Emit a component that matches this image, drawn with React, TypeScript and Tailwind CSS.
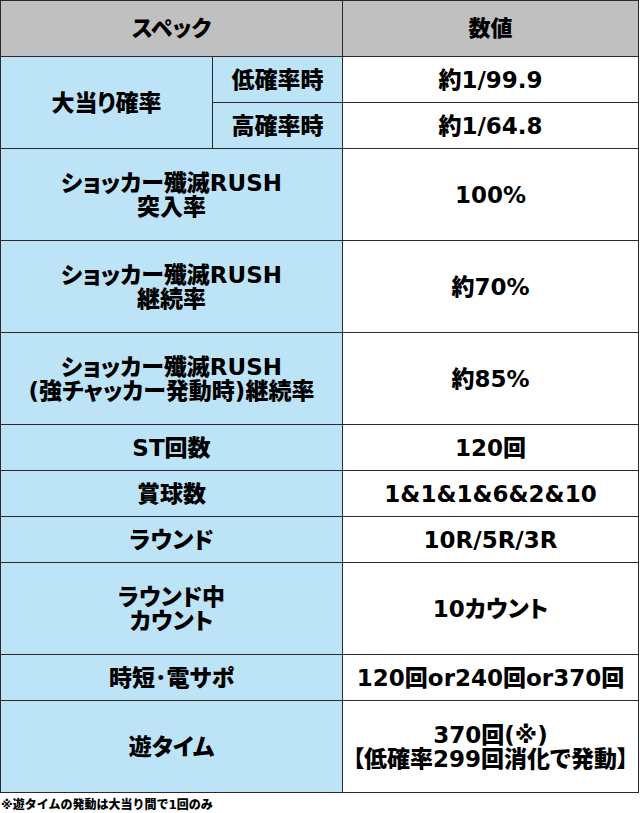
import React from 'react'

const cellBorder = 'border border-[#2a2a2a]'
const label = `${cellBorder} bg-[#bde3f7] text-center align-middle`
const value = `${cellBorder} bg-white text-center align-middle`

type Row = { label: React.ReactNode; value: React.ReactNode; tall?: boolean }

const rows: Row[] = [
  { label: <>ショッカー殲滅RUSH<br />突入率</>, value: '100%', tall: true },
  { label: <>ショッカー殲滅RUSH<br />継続率</>, value: '約70%', tall: true },
  { label: <>ショッカー殲滅RUSH<br />(強チャッカー発動時)継続率</>, value: '約85%', tall: true },
  { label: 'ST回数', value: '120回' },
  { label: '賞球数', value: '1&1&1&6&2&10' },
  { label: 'ラウンド', value: '10R/5R/3R' },
  { label: <>ラウンド中<br />カウント</>, value: '10カウント', tall: true },
  { label: '時短･電サポ', value: '120回or240回or370回' },
  { label: '遊タイム', value: <>370回(※)<br />【低確率299回消化で発動】</>, tall: true },
]

export default function App() {
  return (
    <div
      className="w-[640px] h-[813px] bg-white text-black font-black"
      style={{ fontFamily: '"DejaVu Sans", "Noto Sans CJK JP", sans-serif' }}
    >
      <table className="w-[639px] border-collapse table-fixed text-[23px] leading-[24px] [font-feature-settings:'palt']">
        <colgroup>
          <col className="w-[212px]" />
          <col className="w-[130px]" />
          <col />
        </colgroup>
        <tbody>
          <tr className="h-[56px]">
            <td colSpan={2} className={`${cellBorder} bg-[#c0c0c0] text-center text-[22px]`}>スペック</td>
            <td className={`${cellBorder} bg-[#c0c0c0] text-center text-[22px]`}>数値</td>
          </tr>
          <tr className="h-[46px]">
            <td rowSpan={2} className={label}>大当り確率</td>
            <td className={label}>低確率時</td>
            <td className={value}>約1/99.9</td>
          </tr>
          <tr className="h-[46px]">
            <td className={label}>高確率時</td>
            <td className={value}>約1/64.8</td>
          </tr>
          {rows.map((r, i) => (
            <tr key={i} className={r.tall ? 'h-[92px]' : 'h-[46px]'}>
              <td colSpan={2} className={label}>{r.label}</td>
              <td className={value}>{r.value}</td>
            </tr>
          ))}
        </tbody>
      </table>
      <p className="text-[12px] leading-none mt-[6px] pl-[1px]">※遊タイムの発動は大当り間で1回のみ</p>
    </div>
  )
}
